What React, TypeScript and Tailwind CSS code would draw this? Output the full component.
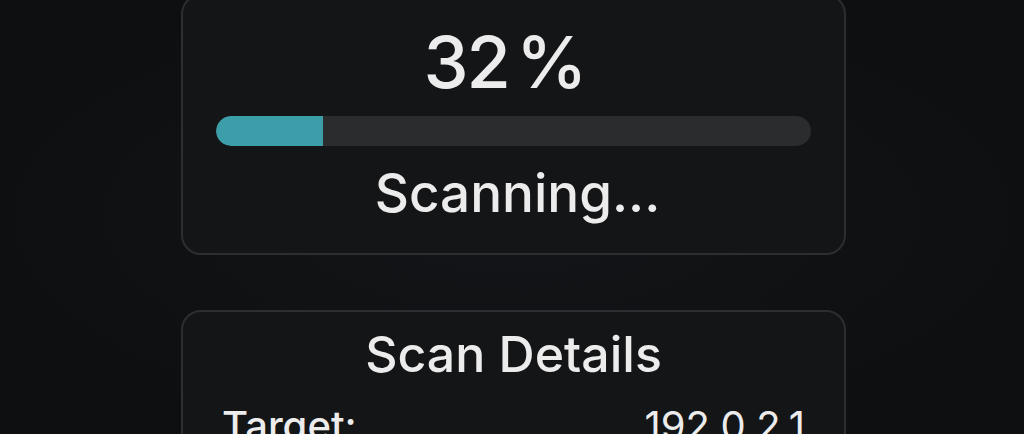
export default function App() {
  const progress = 18;
  return (
    <div
      className="h-[434px] w-[1024px] overflow-hidden bg-[radial-gradient(ellipse_at_center,#141518_0%,#0e0f11_75%)] text-[#ececec]"
      style={{ fontFamily: "Inter, 'Noto Sans', sans-serif" }}
    >
      <div className="-mt-[6px] ml-[181px] flex w-[665px] flex-col gap-[55px]">
        <section className="flex flex-col items-center rounded-[20px] border-2 border-[#2c2e31] bg-[#141517] px-[33px] pt-[30px] pb-[30px]">
          <div className="pr-[18px] text-[72px] font-medium leading-[72px] tracking-[-2px] [word-spacing:-10px]">
            32 %
          </div>
          <div className="mt-[18px] h-[30px] w-full overflow-hidden rounded-full bg-[#2a2c2e]">
            <div
              className="h-full rounded-l-full bg-[#3b9ea8]"
              style={{ width: `${progress}%` }}
            />
          </div>
          <div className="mt-[17px] pl-[8px] text-[53px] font-medium leading-[60px]">
            Scanning...
          </div>
        </section>

        <section className="flex flex-col rounded-[20px] border-2 border-[#2c2e31] bg-[#141517] px-[39px] pt-[14px] pb-[20px]">
          <h2 className="text-center text-[50px] font-medium leading-[56px]">
            Scan Details
          </h2>
          <div className="mt-[20px] flex items-center justify-between text-[40px] font-medium leading-[48px]">
            <span>Target:</span>
            <span className="font-normal">192.0.2.1</span>
          </div>
        </section>
      </div>
    </div>
  );
}
